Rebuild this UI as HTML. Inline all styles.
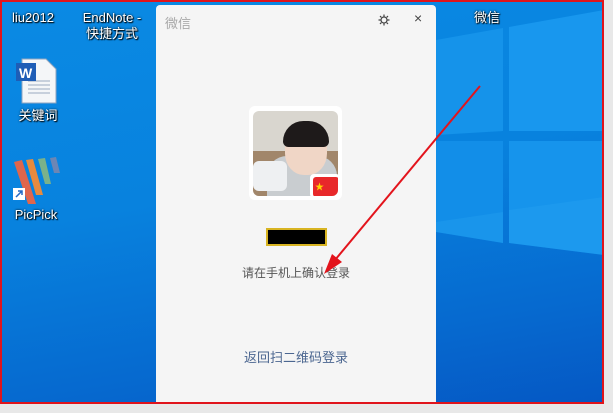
<!DOCTYPE html>
<html><head><meta charset="utf-8"><style>
*{margin:0;padding:0;box-sizing:border-box}
body{width:613px;height:413px;overflow:hidden;background:#e8e8e8;position:relative;font-family:"Liberation Sans","Noto Sans CJK SC",sans-serif}
.desk{position:absolute;left:0;top:0;width:604px;height:404px;border:2px solid #e0141c;overflow:hidden;background:linear-gradient(170deg,#0a8ae4 0%,#0882de 45%,#0669cf 80%,#0558c4 100%)}
.lbl{position:absolute;color:#fff;font-size:13px;text-shadow:1px 1px 1px #000,0 0 2px #000;text-align:center;line-height:16px}
.panel{position:absolute;left:156px;top:5px;width:280px;height:397px;background:#f5f5f5;border-radius:4px 4px 0 0}
</style></head><body>
<div class="desk">
<svg width="604" height="404" style="position:absolute;left:-2px;top:-2px">
<polygon points="436,40 503,28 503,131 436,135" fill="#1593ea"/>
<polygon points="509,27 604,10 604,131 509,131" fill="#1897ee"/>
<polygon points="436,141 503,141 503,243 436,232" fill="#128ee8"/>
<polygon points="509,141 604,141 604,255 509,243" fill="#1694ec"/>
<polygon points="436,222 503,212 503,243 436,232" fill="#2aa4f2" opacity=".3"/>
<polygon points="509,210 604,197 604,255 509,243" fill="#2aa4f2" opacity=".3"/>
</svg>
<div class="lbl" style="left:6px;top:8px;width:50px">liu2012</div>
<div class="lbl" style="left:72px;top:8px;width:76px">EndNote -<br>快捷方式</div>
<div class="lbl" style="left:460px;top:8px;width:50px">微信</div>
<svg width="50" height="50" style="position:absolute;left:12px;top:55px">
<path d="M8 2h24l10 10v34H8z" fill="#f4f6f8" stroke="#8ea4c0"/>
<path d="M14 24h22M14 28h22M14 32h22M14 36h22" stroke="#9aaac0"/>
<rect x="2" y="6" width="20" height="18" fill="#1e5db6"/>
<text x="5" y="21" fill="#fff" font-size="14" font-weight="bold" font-family="Liberation Sans">W</text>
</svg>
<div class="lbl" style="left:6px;top:106px;width:60px">关键词</div>
<svg width="50" height="50" style="position:absolute;left:10px;top:152px">
<path d="M2 8l8-2 14 44h-8z" fill="#e0664c"/>
<path d="M14 6l7-1 10 36h-7z" fill="#e88a3e"/>
<path d="M26 5l7-1 6 26h-6z" fill="#7ab28a"/>
<path d="M38 4l6-1 4 16h-6z" fill="#6c86b4"/>
<rect x="1" y="34" width="12" height="12" fill="#fff"/>
<path d="M4 43l6-6M6 37h4v4" stroke="#2469c4" stroke-width="1.5" fill="none"/>
</svg>
<div class="lbl" style="left:6px;top:205px;width:56px">PicPick</div>
</div>
<div class="panel">
<div style="position:absolute;left:9px;top:8px;font-size:13px;color:#a8a8a8">微信</div>
<svg width="12" height="12" style="position:absolute;left:222px;top:9px"><circle cx="6" cy="6" r="3" fill="none" stroke="#444" stroke-width="1.2"/><path d="M6 0.5v2M6 9.5v2M0.5 6h2M9.5 6h2M2 2l1.4 1.4M8.6 8.6L10 10M2 10l1.4-1.4M8.6 3.4L10 2" stroke="#444" stroke-width="1.2"/></svg>
<div style="position:absolute;left:258px;top:5px;font-size:14px;color:#444">×</div>
<div style="position:absolute;left:93px;top:101px;width:93px;height:94px;background:#fff;border-radius:6px"></div>
<div style="position:absolute;left:97px;top:106px;width:85px;height:85px;border-radius:6px;overflow:hidden;background:#d9d6cf">
<div style="position:absolute;left:0;top:40px;width:85px;height:45px;background:#a1866a"></div>
<div style="position:absolute;left:14px;top:45px;width:70px;height:40px;background:#c9cdd0;border-radius:20px 20px 0 0"></div>
<div style="position:absolute;left:32px;top:16px;width:42px;height:48px;background:#f0d6c6;border-radius:45%"></div>
<div style="position:absolute;left:30px;top:10px;width:46px;height:26px;background:#1e1a1a;border-radius:22px 22px 6px 6px"></div>
<div style="position:absolute;left:0;top:50px;width:34px;height:30px;background:#eef0f2;border-radius:6px"></div>
<div style="position:absolute;left:57px;top:63px;width:30px;height:24px;background:#fff;border-radius:4px"></div>
<div style="position:absolute;left:60px;top:66px;width:26px;height:20px;background:#e8282a;border-radius:3px"></div>
<div style="position:absolute;left:62px;top:69px;color:#ffd400;font-size:9px">★</div>
</div>
<div style="position:absolute;left:110px;top:223px;width:61px;height:18px;background:#000;border:2px solid #d8b422"></div>
<div style="position:absolute;left:0;top:259px;width:280px;text-align:center;font-size:12px;color:#555">请在手机上确认登录</div>
<div style="position:absolute;left:0;top:342px;width:280px;text-align:center;font-size:13px;color:#4b6690">返回扫二维码登录</div>
</div>
<svg width="613" height="413" style="position:absolute;left:0;top:0">
<line x1="480" y1="86" x2="330" y2="266" stroke="#e3141c" stroke-width="2"/>
<polygon points="324,274 332,254 342,262" fill="#e3141c"/>
</svg>
</body></html>
